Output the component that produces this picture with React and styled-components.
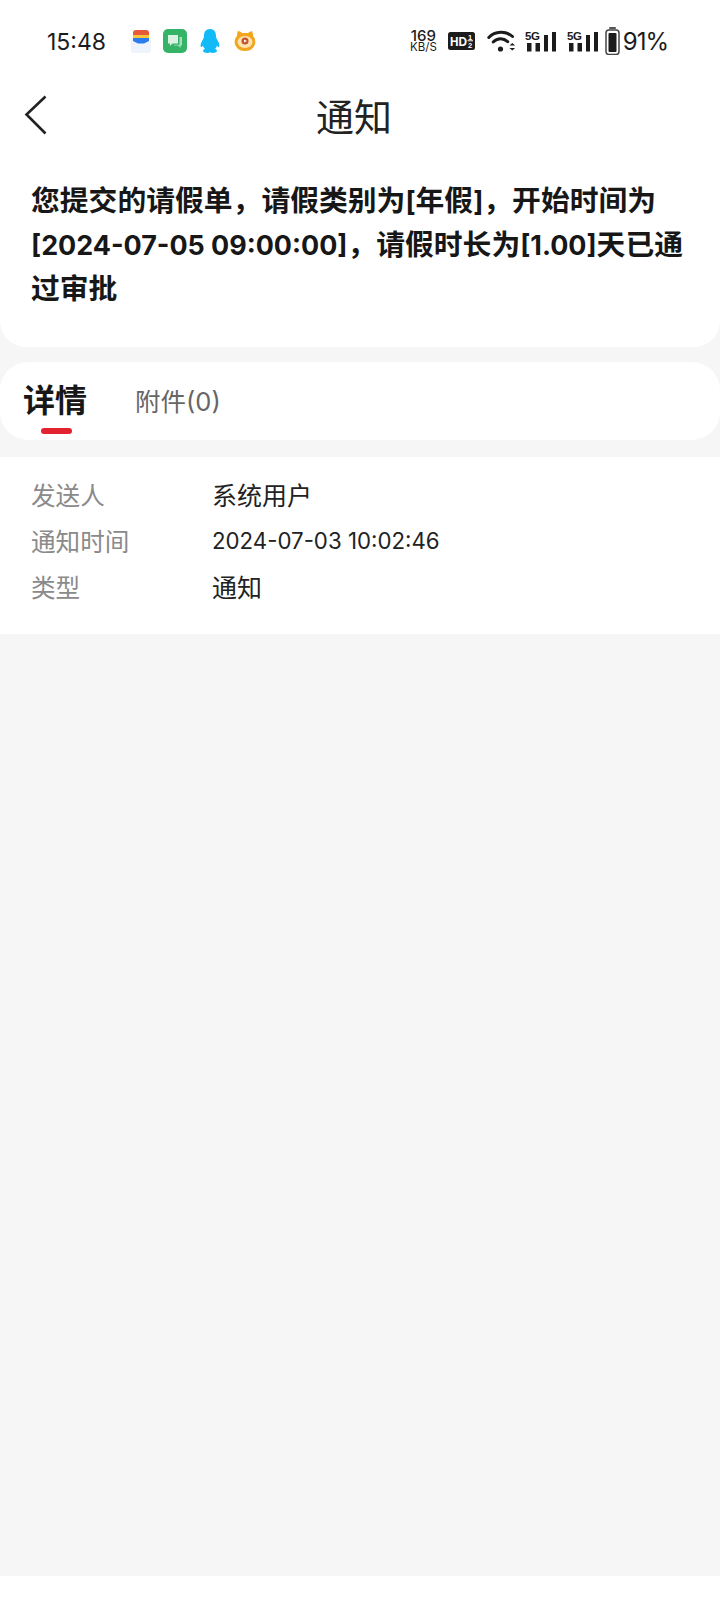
import React from 'react';
import styled, { createGlobalStyle } from 'styled-components';

const GlobalStyle = createGlobalStyle`
    html, body {
        margin: 0;
        padding: 0;
        background: #fff;
    }
    * {
        box-sizing: border-box;
    }
`;

const FONT = `"Inter", "Noto Sans CJK SC", sans-serif`;

const Page = styled.div`
    width: 720px;
    height: 1608px;
    display: flex;
    flex-direction: column;
    background: #f6f6f6;
    font-family: ${FONT};
    overflow: hidden;
`;

const Header = styled.div`
    background: #fff;
    border-radius: 0 0 26px 26px;
    height: 347px;
    flex-shrink: 0;
`;

const StatusBar = styled.div`
    height: 83px;
    padding: 0 52px 1px 47px;
    display: flex;
    align-items: center;
    justify-content: space-between;
`;

const StatusGroup = styled.div`
    display: flex;
    align-items: center;
`;

const Slot = styled.div`
    display: flex;
    margin-left: ${(p) => p.$left || 0}px;
`;

const Time = styled.span`
    font-size: 23px;
    color: #1c1c1c;
    width: 84px;
    padding-top: 1px;
`;

const Battery = styled.span`
    font-size: 24px;
    letter-spacing: -1px;
    color: #1c1c1c;
    margin-left: 3px;
`;

const Speed = styled.div`
    display: flex;
    flex-direction: column;
    align-items: center;
    color: #1c1c1c;
    font-size: 15px;
    font-weight: 500;
    line-height: 13px;
    span + span {
        font-size: 11.5px;
        font-weight: 400;
        line-height: 11px;
    }
`;

const NavBar = styled.div`
    position: relative;
    height: 66px;
    display: flex;
    align-items: center;
    justify-content: center;
`;

const BackIcon = styled.svg`
    position: absolute;
    left: 24px;
    top: 12px;
`;

const NavTitle = styled.div`
    font-size: 38px;
    color: #222;
    line-height: 66px;
    margin: 2px 0 0 -12px;
`;

const Message = styled.div`
    padding: 30px 28px 0 31px;
    font-size: 28.8px;
    font-weight: 700;
    line-height: 44px;
    color: #171717;
`;

// latin runs sit a little smaller than the CJK text next to them
const Latin = styled.span`
    font-size: ${(p) => p.$scale || 0.935}em;
    line-height: 1;
`;

const Tabs = styled.div`
    margin-top: 15px;
    height: 78px;
    background: #fff;
    border-radius: 28px;
    padding: 0 0 0 23px;
    display: flex;
    align-items: flex-start;
    gap: 48px;
    flex-shrink: 0;
`;

const Tab = styled.div`
    position: relative;
    height: 78px;
    padding-bottom: ${(p) => (p.$active ? '6px' : '3px')};
    display: flex;
    align-items: center;
    font-size: ${(p) => (p.$active ? '32px' : '25.5px')};
    font-weight: ${(p) => (p.$active ? 700 : 400)};
    color: ${(p) => (p.$active ? '#171717' : '#666')};
`;

const TabMark = styled.span`
    position: absolute;
    left: 18px;
    top: 66px;
    width: 31px;
    height: 6px;
    border-radius: 3px;
    background: #e3232f;
`;

const Details = styled.div`
    margin-top: 17px;
    height: 177px;
    background: #fff;
    padding: 14px 30px 0 31px;
    flex-shrink: 0;
`;

const Row = styled.div`
    height: 46px;
    display: grid;
    grid-template-columns: 181px 1fr;
    align-items: center;
    font-size: 24.6px;
`;

const Label = styled.span`
    color: #8a8a8a;
`;

const Value = styled.span`
    color: #222;
    font-size: 25px;
`;

const Spacer = styled.div`
    flex: 1;
`;

const BottomBar = styled.div`
    height: 32px;
    background: #fff;
    flex-shrink: 0;
`;

const WalletIcon = () => (
    <svg width="20" height="24" viewBox="0 0 20 24">
        <rect x="0" y="9" width="20" height="15" rx="3" fill="#eef3fc" />
        <path d="M2 4a3 3 0 0 1 3-3h10a3 3 0 0 1 3 3v2H2z" fill="#e8593c" />
        <rect x="2" y="6" width="16" height="3" fill="#f9c53a" />
        <path d="M2 9h16v3l-5 2.500H7L2 12z" fill="#2c7cf0" />
    </svg>
);

const ChatIcon = () => (
    <svg width="24" height="24" viewBox="0 0 24 24">
        <rect width="24" height="24" rx="5" fill="#35b468" />
        <path d="M5 6h10v8.500H9.500L7 17v-2.500H5z" fill="#d9f2e2" />
        <path d="M16.500 8H19v8.500h-1.500V19l-2.500-2.500h-4v-.8h5.500z" fill="#a5e0bb" />
    </svg>
);

const QQIcon = () => (
    <svg width="22" height="24" viewBox="0 0 22 24">
        <path d="M11 0c4.200 0 6 3.200 6 7 0 2 .8 3 2 5 1.500 2.600 1.800 5.400 1 6-.6.400-1.300-.3-2-1.500-.3 1.500-1 2.500-2 3.300 1.200.5 2 1.200 2 2.200 0 1.300-2.500 2-4.500 2-1.200 0-2-.3-2.500-.8-.5.500-1.300.8-2.500.8-2 0-4.500-.7-4.500-2 0-1 .8-1.700 2-2.200-1-.8-1.700-1.800-2-3.300-.7 1.200-1.400 1.900-2 1.500-.8-.6-.5-3.400 1-6 1.200-2 2-3 2-5 0-3.800 1.800-7 6-7z" fill="#12bbf7" />
    </svg>
);

const TigerIcon = () => (
    <svg width="22" height="22" viewBox="0 0 22 22">
        <path d="M4 1c2 0 3 1 4 2h6c1-1 2-1 4-2 1 2 1 4 1 5 3 3 3 8 .5 11-2 3-5 4-8.500 4s-6.500-1-8.500-4C0 14 0 9 3 6c0-1 0-3 1-5z" fill="#f2a61f" />
        <ellipse cx="11" cy="12" rx="7.500" ry="6" fill="#fde3ae" />
        <circle cx="11" cy="11" r="3.500" fill="#c8502a" />
        <path d="M10 9.500l3 1.500-3 1.500z" fill="#fff" />
    </svg>
);

const HdIcon = () => (
    <svg width="27" height="18" viewBox="0 0 27 18">
        <rect width="27" height="18" rx="2.500" fill="#1c1c1c" />
        <text x="2" y="14" fontFamily="Liberation Sans, sans-serif" fontSize="13" fontWeight="700" fill="#fff" textLength="17" lengthAdjust="spacingAndGlyphs">HD</text>
        <text x="20" y="7.500" fontFamily="Liberation Sans, sans-serif" fontSize="7.500" fontWeight="700" fill="#fff">1</text>
        <rect x="19.500" y="8.300" width="5.500" height="1" fill="#fff" />
        <text x="20" y="16" fontFamily="Liberation Sans, sans-serif" fontSize="7.500" fontWeight="700" fill="#fff">2</text>
    </svg>
);

const WifiIcon = () => (
    <svg width="29" height="22" viewBox="0 0 29 22" fill="none" stroke="#1c1c1c" strokeWidth="3" strokeLinecap="round">
        <path d="M1.800 7.500C8 1 19 .5 25.500 6.500" />
        <path d="M6.200 12c4.500-4.200 10-4.200 14.500-.3" />
        <circle cx="13.500" cy="19" r="2.600" fill="#1c1c1c" stroke="none" />
        <path d="M22.500 15.500l2.800-2.500 2.800 2.500zM22.500 18l2.800 2.500 2.800-2.500z" fill="#1c1c1c" stroke="none" />
    </svg>
);

const SignalIcon = () => (
    <svg width="32" height="22" viewBox="0 0 32 22">
        <text x="0" y="10" fontFamily="Liberation Sans, sans-serif" fontSize="11.500" fontWeight="700" fill="#1c1c1c" textLength="15">5G</text>
        <rect x="2" y="13" width="4.500" height="8.500" fill="#1c1c1c" />
        <rect x="10.500" y="13" width="4.500" height="8.500" fill="#1c1c1c" />
        <rect x="19" y="5" width="4" height="16.500" fill="#1c1c1c" />
        <rect x="27" y="2" width="4" height="19.500" fill="#1c1c1c" />
    </svg>
);

const BatteryIcon = () => (
    <svg width="15" height="28" viewBox="0 0 15 28">
        <rect x="4" y="0" width="7" height="2" rx="1" fill="#555" />
        <rect x="1" y="3" width="13" height="24.500" rx="3" fill="none" stroke="#444" strokeWidth="1.500" />
        <rect x="3.500" y="6" width="8" height="19" rx="1" fill="#1c1c1c" />
    </svg>
);

const App = () => (
    <Page>
        <GlobalStyle />
        <Header>
            <StatusBar>
                <StatusGroup>
                    <Time>15:48</Time>
                    <Slot><WalletIcon /></Slot>
                    <Slot $left={12}><ChatIcon /></Slot>
                    <Slot $left={12}><QQIcon /></Slot>
                    <Slot $left={13}><TigerIcon /></Slot>
                </StatusGroup>
                <StatusGroup>
                    <Speed>
                        <span>169</span>
                        <span>KB/S</span>
                    </Speed>
                    <Slot $left={11}><HdIcon /></Slot>
                    <Slot $left={12}><WifiIcon /></Slot>
                    <Slot $left={9}><SignalIcon /></Slot>
                    <Slot $left={10}><SignalIcon /></Slot>
                    <Slot $left={6}><BatteryIcon /></Slot>
                    <Battery>91%</Battery>
                </StatusGroup>
            </StatusBar>
            <NavBar>
                <BackIcon width="24" height="40" viewBox="0 0 24 40" fill="none" stroke="#222" strokeWidth="2.600">
                    <path d="M21.500 1.500L2.500 19.500l19 19" />
                </BackIcon>
                <NavTitle>通知</NavTitle>
            </NavBar>
            <Message>
                您提交的请假单，请假类别为<Latin>[</Latin>年假<Latin>]</Latin>，开始时间为
                <Latin>[2024-07-05 09:00:00]</Latin>，请假时长为<Latin>[1.00]</Latin>天已通过审批
            </Message>
        </Header>
        <Tabs>
            <Tab $active>
                详情
                <TabMark />
            </Tab>
            <Tab><span>附件(0)</span></Tab>
        </Tabs>
        <Details>
            <Row>
                <Label>发送人</Label>
                <Value>系统用户</Value>
            </Row>
            <Row>
                <Label>通知时间</Label>
                <Value><Latin $scale={0.89}>2024-07-03 10:02:46</Latin></Value>
            </Row>
            <Row>
                <Label>类型</Label>
                <Value>通知</Value>
            </Row>
        </Details>
        <Spacer />
        <BottomBar />
    </Page>
);

export default App;
